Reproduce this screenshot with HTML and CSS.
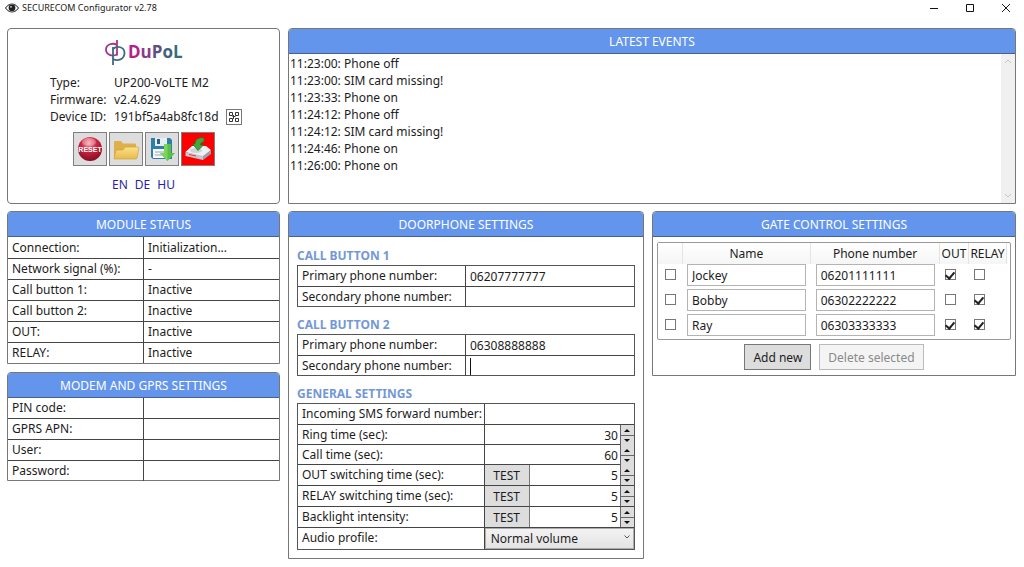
FILE: index.html
```html
<!DOCTYPE html>
<html lang="en">
<head>
<meta charset="utf-8">
<meta name="viewport" content="width=device-width, initial-scale=1">
<title>SECURECOM Configurator v2.78</title>
<link rel="stylesheet" href="styles.css">
</head>
<body>
<header class="titlebar">
  <svg class="eye" viewBox="0 0 14 10" width="14" height="10" aria-hidden="true"><path d="M.5 5Q3.500 1 7 1t6.500 4Q10.500 9 7 9T.5 5z" fill="#fff" stroke="#444" stroke-width="1.200"/><circle cx="7" cy="4.800" r="3.400" fill="#222"/><circle cx="6" cy="3.800" r=".9" fill="#ddd"/></svg>
  <h1 class="app-name">SECURECOM Configurator v2.78</h1>
  <button class="win-btn" aria-label="Minimize"><svg viewBox="0 0 10 10" width="10" height="10"><path d="M1 5.500h8" stroke="#111"/></svg></button>
  <button class="win-btn" aria-label="Maximize"><svg viewBox="0 0 10 10" width="10" height="10"><path d="M1.500 1.500h7v7h-7z" fill="none" stroke="#111"/></svg></button>
  <button class="win-btn" aria-label="Close"><svg viewBox="0 0 10 10" width="10" height="10"><path d="M1 1l8 8M9 1L1 9" stroke="#222"/></svg></button>
</header>

<main class="layout">
  <section class="card device">
    <svg class="logo" viewBox="0 0 80 30" width="80" height="30" role="img" aria-label="DuPoL">
      <g fill="none" stroke-width="1.800">
        <path d="M13 8C9 5.500 2 7 2 12.500c0 5 6 7.500 11 5" stroke="#a8328f"/>
        <path d="M13 3v15.500" stroke="#a8328f"/>
        <path d="M9 10v18" stroke="#3d6a80"/>
        <path d="M9 12c4-3.500 11.500-2.500 11.500 4S13.500 24.500 9 22" stroke="#3d6a80"/>
      </g>
      <text x="24" y="21" class="logo-text"><tspan fill="#b3208c">D</tspan><tspan fill="#8c3a8a">u</tspan><tspan fill="#5f4f80">P</tspan><tspan fill="#3f6480">o</tspan><tspan fill="#34707d">L</tspan></text>
    </svg>
    <dl class="facts">
      <dt>Type:</dt><dd>UP200-VoLTE M2</dd>
      <dt>Firmware:</dt><dd>v2.4.629</dd>
      <dt>Device ID:</dt><dd>191bf5a4ab8fc18d
        <button class="qr" aria-label="Show QR code"><svg viewBox="0 0 12 12" width="12" height="12" fill="none" stroke="#333"><path d="M1.500 1.500h3v3h-3zM7.500 1.500h3v3h-3zM1.500 7.500h3v3h-3zM7.500 7.500h3v3h-3zM4.500 5.500h3M5.500 4v4"/></svg></button></dd>
    </dl>
    <div class="tools">
      <button class="tool" aria-label="Reset">
        <svg viewBox="0 0 28 28" width="28" height="28"><defs><radialGradient id="ball" cx=".45" cy=".25" r=".8"><stop offset="0" stop-color="#f3a4ae"/><stop offset=".4" stop-color="#cf2743"/><stop offset="1" stop-color="#7c0a20"/></radialGradient></defs><circle cx="14" cy="14" r="12" fill="url(#ball)"/><ellipse cx="13" cy="7" rx="7" ry="4" fill="#fff" opacity=".25"/><text x="14" y="17" class="reset-text">RESET</text></svg>
      </button>
      <button class="tool" aria-label="Open">
        <svg viewBox="0 0 28 28" width="28" height="28"><defs><linearGradient id="fold" x1="0" y1="0" x2="0" y2="1"><stop offset="0" stop-color="#fbe08a"/><stop offset="1" stop-color="#e9bb4c"/></linearGradient></defs><path d="M2 22V7q0-1 1-1h6l2 2.500h12q1 0 1 1V22z" fill="#dfb04a"/><path d="M2 24l2-9h7l2-3H26q1 0 .9 1L25 23q-.2 1-1.200 1z" fill="url(#fold)" stroke="#cf9c2e" stroke-width=".6"/></svg>
      </button>
      <button class="tool" aria-label="Save">
        <svg viewBox="0 0 28 28" width="28" height="28"><path d="M3 3h19l2 2v19H5l-2-2z" fill="#2f7fa8"/><path d="M7 3h12v8H7z" fill="#e6eef2"/><path d="M9 4h3v5H9z" fill="#2b6382"/><path d="M5 14h15v9H5z" fill="#f6f8f9"/><path d="M7 17h9M7 20h9" stroke="#9aa7ae"/><path d="M16 9h7v9h4l-7.500 8-7.500-8h4z" fill="#5cc043"/><path d="M16 9h3.500v17L12 18h4z" fill="#7bd45b"/></svg>
      </button>
      <button class="tool tool-alert" aria-label="Write to device">
        <svg viewBox="0 0 28 28" width="28" height="28"><path d="M1.500 17L8 11h14l5 4-8 7z" fill="#eef0f3"/><path d="M1.500 17L19 21v4L1.500 21z" fill="#c3c7d0"/><path d="M19 21l8-6v4l-8 6z" fill="#9ba1ae"/><path d="M5 19.500l7 1.500" stroke="#e04040"/><ellipse cx="12" cy="15.500" rx="6" ry="2.500" fill="#cfd3da"/><path d="M20 3c-5-1-9 1-9 6H8.500l5.500 6.500 5.500-5.500h-3c0-2 1-3 3.500-3z" fill="#43a63a" stroke="#237022" stroke-width=".7"/></svg>
      </button>
    </div>
    <nav class="langs" aria-label="Language"><a href="#en">EN</a><a href="#de">DE</a><a href="#hu">HU</a></nav>
  </section>

  <section class="card events">
    <h2 class="card-head">LATEST EVENTS</h2>
    <div class="log">
      <ul class="log-list">
        <li>11:23:00: Phone off</li>
        <li>11:23:00: SIM card missing!</li>
        <li>11:23:33: Phone on</li>
        <li>11:24:12: Phone off</li>
        <li>11:24:12: SIM card missing!</li>
        <li>11:24:46: Phone on</li>
        <li>11:26:00: Phone on</li>
      </ul>
      <div class="scroll" aria-hidden="true">
        <svg viewBox="0 0 8 6" width="8" height="6"><path d="M1 5l3-3 3 3" fill="none" stroke="#c4c4c4"/></svg>
        <svg viewBox="0 0 8 6" width="8" height="6"><path d="M1 1l3 3 3-3" fill="none" stroke="#c4c4c4"/></svg>
      </div>
    </div>
  </section>

  <div class="stack">
    <section class="card">
      <h2 class="card-head">MODULE STATUS</h2>
      <table class="status">
        <tr><th scope="row">Connection:</th><td>Initialization...</td></tr>
        <tr><th scope="row">Network signal (%):</th><td>-</td></tr>
        <tr><th scope="row">Call button 1:</th><td>Inactive</td></tr>
        <tr><th scope="row">Call button 2:</th><td>Inactive</td></tr>
        <tr><th scope="row">OUT:</th><td>Inactive</td></tr>
        <tr><th scope="row">RELAY:</th><td>Inactive</td></tr>
      </table>
    </section>
    <section class="card">
      <h2 class="card-head">MODEM AND GPRS SETTINGS</h2>
      <div class="row"><label for="pin">PIN code:</label><input id="pin"></div>
      <div class="row"><label for="apn">GPRS APN:</label><input id="apn"></div>
      <div class="row"><label for="user">User:</label><input id="user"></div>
      <div class="row"><label for="pass">Password:</label><input id="pass" type="password"></div>
    </section>
  </div>

  <section class="card door">
    <h2 class="card-head">DOORPHONE SETTINGS</h2>
    <div class="door-body">
      <h3 class="group-head">CALL BUTTON 1</h3>
      <div class="group">
        <div class="row"><label for="p1">Primary phone number:</label><input id="p1" value="06207777777"></div>
        <div class="row"><label for="s1">Secondary phone number:</label><input id="s1"></div>
      </div>
      <h3 class="group-head">CALL BUTTON 2</h3>
      <div class="group">
        <div class="row"><label for="p2">Primary phone number:</label><input id="p2" value="06308888888"></div>
        <div class="row"><label for="s2">Secondary phone number:</label><div class="field caret"><input id="s2"></div></div>
      </div>
      <h3 class="group-head">GENERAL SETTINGS</h3>
      <div class="group general">
        <div class="row"><label for="sms">Incoming SMS forward number:</label><input id="sms"></div>
        <div class="row short"><label for="ring">Ring time (sec):</label><div class="field"><input id="ring" class="num" value="30"><span class="spin"><button class="up" aria-label="Increase ring time"></button><button class="down" aria-label="Decrease ring time"></button></span></div></div>
        <div class="row short"><label for="call">Call time (sec):</label><div class="field"><input id="call" class="num" value="60"><span class="spin"><button class="up" aria-label="Increase call time"></button><button class="down" aria-label="Decrease call time"></button></span></div></div>
        <div class="row"><label for="out">OUT switching time (sec):</label><div class="field"><button class="test">TEST</button><input id="out" class="num" value="5"><span class="spin"><button class="up" aria-label="Increase OUT time"></button><button class="down" aria-label="Decrease OUT time"></button></span></div></div>
        <div class="row"><label for="relay">RELAY switching time (sec):</label><div class="field"><button class="test">TEST</button><input id="relay" class="num" value="5"><span class="spin"><button class="up" aria-label="Increase RELAY time"></button><button class="down" aria-label="Decrease RELAY time"></button></span></div></div>
        <div class="row"><label for="light">Backlight intensity:</label><div class="field"><button class="test">TEST</button><input id="light" class="num" value="5"><span class="spin"><button class="up" aria-label="Increase backlight"></button><button class="down" aria-label="Decrease backlight"></button></span></div></div>
        <div class="row tall"><label for="audio">Audio profile:</label><div class="field"><select id="audio"><option>Normal volume</option></select><svg class="chev" viewBox="0 0 8 6" width="8" height="6" aria-hidden="true"><path d="M1.500 1.500L4 4l2.500-2.500" fill="none" stroke="#555"/></svg></div></div>
      </div>
    </div>
  </section>

  <section class="card gate">
    <h2 class="card-head">GATE CONTROL SETTINGS</h2>
    <div class="gate-body">
      <div class="users-box">
        <table class="users">
          <colgroup><col class="c-pick"><col><col><col class="c-out"><col class="c-relay"></colgroup>
          <thead><tr><th></th><th>Name</th><th>Phone number</th><th>OUT</th><th>RELAY</th></tr></thead>
          <tbody>
            <tr><td><input type="checkbox" aria-label="Select Jockey"></td><td><input class="cell" aria-label="Name" value="Jockey"></td><td><input class="cell" aria-label="Phone number" value="06201111111"></td><td><input type="checkbox" aria-label="OUT" checked></td><td><input type="checkbox" aria-label="RELAY"></td></tr>
            <tr><td><input type="checkbox" aria-label="Select Bobby"></td><td><input class="cell" aria-label="Name" value="Bobby"></td><td><input class="cell" aria-label="Phone number" value="06302222222"></td><td><input type="checkbox" aria-label="OUT"></td><td><input type="checkbox" aria-label="RELAY" checked></td></tr>
            <tr><td><input type="checkbox" aria-label="Select Ray"></td><td><input class="cell" aria-label="Name" value="Ray"></td><td><input class="cell" aria-label="Phone number" value="06303333333"></td><td><input type="checkbox" aria-label="OUT" checked></td><td><input type="checkbox" aria-label="RELAY" checked></td></tr>
          </tbody>
        </table>
      </div>
      <div class="actions">
        <button class="btn">Add new</button>
        <button class="btn" disabled>Delete selected</button>
      </div>
    </div>
  </section>
</main>
</body>
</html>
```

FILE: styles.css
```css
* { box-sizing: border-box; }

body {
  margin: 0;
  background: #fff;
  color: #1c1c1c;
  font: 12px/17px "Noto Sans", "Open Sans", sans-serif;
}

h1, h2, h3, ul, dl, dd { margin: 0; padding: 0; }
svg { display: block; }

button, input, select {
  margin: 0;
  padding: 0;
  border: 0;
  border-radius: 0;
  background: none;
  color: inherit;
  font: inherit;
}

/* Title bar */
.titlebar { display: flex; align-items: center; height: 16px; padding-left: 5px; }
.app-name { flex: 1; margin-left: 3px; font-size: 9px; line-height: 16px; font-weight: 400; }
.win-btn { display: flex; align-items: center; justify-content: center; width: 36px; height: 16px; }

/* Page grid */
.layout {
  display: grid;
  grid-template-columns: 273fr 356fr 364fr;
  gap: 7px 8px;
  align-items: start;
  padding: 12px 8px 8px 7px;
}
.events { grid-column: span 2; align-self: stretch; }
.stack { display: grid; gap: 8px; }

.card { border: 1px solid #777; border-radius: 4px; }
.stack .card, .door, .gate, .events { border-radius: 4px 4px 0 0; }
.card-head {
  height: 25px;
  border-bottom: 1px solid #4c5f88;
  border-radius: 3px 3px 0 0;
  background: #6495ed;
  color: #fff;
  font-size: 12px;
  line-height: 25px;
  font-weight: 400;
  text-align: center;
}

/* Device card */
.device { display: flex; flex-direction: column; align-items: center; padding: 8px 0 10px; }
.logo-text { font: 700 17px "Open Sans", sans-serif; }
.facts {
  display: grid;
  grid-template-columns: 64px auto;
  align-self: stretch;
  margin-top: 7px;
  padding-left: 42px;
}
.facts dd { display: flex; align-items: center; gap: 7px; height: 17px; }
.qr { display: flex; align-items: center; justify-content: center; width: 16px; height: 16px; border: 1px solid #777; }
.tools { display: flex; gap: 2px; margin-top: 7px; }
.tool {
  display: flex;
  align-items: center;
  justify-content: center;
  width: 34px;
  height: 34px;
  border: 1px solid #808080;
  background: #ddd;
}
.tool-alert { background: #f00; }
.reset-text { fill: #fff; font: 700 7px "Liberation Sans", sans-serif; text-anchor: middle; }
.langs { display: flex; gap: 7px; margin-top: 10px; }
.langs a { color: #2a1fa8; text-decoration: none; }

/* Event log */
.events { display: flex; flex-direction: column; }
.log { display: flex; flex: 1; }
.log-list { flex: 1; padding: 1px; list-style: none; }
.scroll {
  display: flex;
  flex-direction: column;
  align-items: center;
  justify-content: space-between;
  width: 14px;
  padding: 4px 0;
  background: #f0f0f0;
}

/* Status table */
.status { width: 100%; border-collapse: collapse; table-layout: fixed; }
.status th, .status td { height: 21px; padding: 0 4px; font-weight: 400; text-align: left; }
.status th { border-right: 1px solid #444; }
.status tr + tr { border-top: 1px solid #444; }

/* Label and value rows */
.row { display: grid; grid-template-columns: 1fr 1fr; height: 21px; border-bottom: 1px solid #444; }
.row:last-child { border-bottom: 0; height: 19px; }
.row label { padding-left: 4px; border-right: 1px solid #444; line-height: 20px; white-space: nowrap; }
.row input { width: 100%; min-width: 0; padding: 0 4px; outline: 0; }
.general .row { grid-template-columns: 5fr 4fr; }
.general .short { height: 20px; }
.general .tall { height: 21px; }

/* Doorphone card */
.door-body { padding: 10px 8px 8px; }
.group { border: 1px solid #555; }
.group-head { color: #7398d6; font-size: 12px; line-height: 18px; font-weight: 700; }
.group + .group-head { margin-top: 9px; }
.field { position: relative; display: flex; min-width: 0; }
.caret::before { content: ""; position: absolute; left: 4px; top: 2px; bottom: 1px; width: 1px; background: #111; }
.field .num { flex: 1; padding-right: 2px; text-align: right; }
.test { width: 45px; border: 1px solid #777; border-width: 0 1px 0 0; background: #ddd; }
.spin { display: grid; grid-template-rows: 1fr 1fr; width: 14px; border-left: 1px solid #666; }
.spin button { display: flex; align-items: center; justify-content: center; background: #ddd; min-height: 0; }
.spin .down { border-top: 1px solid #666; }
.spin button::before { content: ""; border: 3px solid transparent; }
.spin .up::before { border-top: 0; border-bottom: 3px solid #111; }
.spin .down::before { border-bottom: 0; border-top: 3px solid #111; }
select {
  flex: 1;
  min-width: 0;
  padding-left: 5px;
  border: 1px solid #acacac;
  appearance: none;
  background: linear-gradient(#f2f2f2, #e4e4e4);
}
.chev { position: absolute; right: 3px; top: 6px; pointer-events: none; }

/* Gate card */
.gate-body { padding: 5px 4px; }
.users-box { padding-right: 3px; border: 1px solid #999; border-radius: 2px; }
.users { width: 100%; border-collapse: collapse; table-layout: fixed; }
.c-pick { width: 24px; }
.c-out { width: 29px; }
.c-relay { width: 38px; }
.users th { height: 21px; padding: 0; border-right: 1px solid #e4e4e4; background: linear-gradient(#fff, #f5f5f5); font-weight: 400; text-align: center; }
.users td { height: 25px; padding: 0 5px; vertical-align: top; }
.users td:first-child { padding-left: 7px; }
.cell { display: block; width: 100%; height: 22px; padding: 0 4px; border: 1px solid #b4b4b4; }
.users input[type="checkbox"] {
  display: grid;
  align-content: start;
  justify-content: center;
  width: 11px;
  height: 11px;
  margin: 5px 0 0;
  border: 1px solid #777;
  appearance: none;
  background: #fff;
}
.users input[type="checkbox"]:checked::before {
  content: "";
  width: 4px;
  height: 7px;
  border: solid #222;
  border-width: 0 2px 2px 0;
  transform: rotate(40deg);
}
.actions { display: flex; justify-content: center; gap: 8px; margin-top: 4px; }
.btn { height: 26px; padding: 0 8px; border: 1px solid #777; background: #ddd; }
.btn:disabled { border-color: #bbb; background: #f4f4f4; color: #8a8a8a; }
```
